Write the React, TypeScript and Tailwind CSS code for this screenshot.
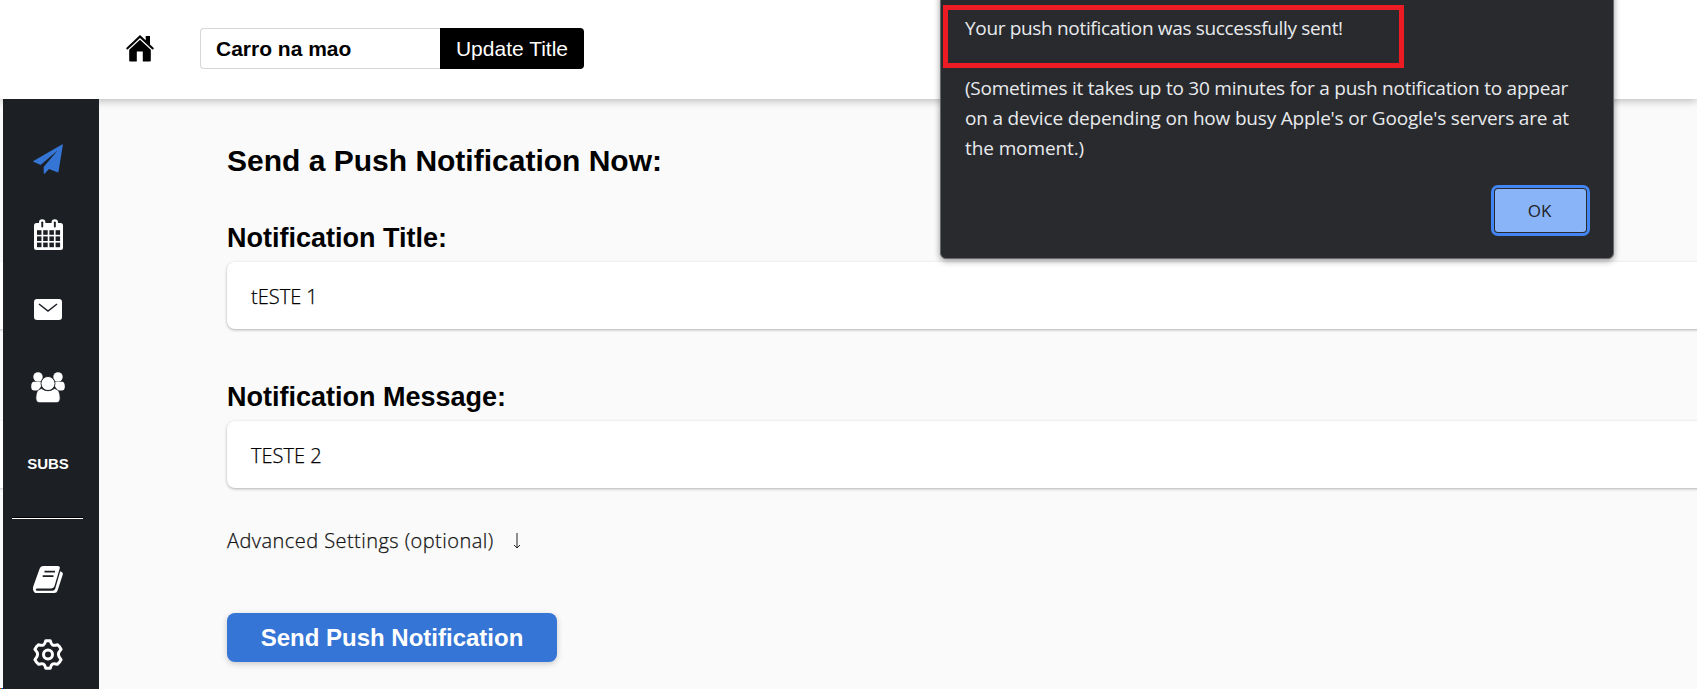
import type { ReactNode } from "react";

const heading = "font-['Liberation_Sans',Arial,sans-serif] font-bold text-black whitespace-nowrap";
const body = "font-['Open_Sans','Noto_Sans',sans-serif] whitespace-nowrap";

function HomeIcon() {
  return (
    <svg viewBox="0 0 28 27" className="h-[27px] w-[28px] shrink-0" fill="#000">
      <path d="M14 0 0 13.2l1.4 1.5L14 3l12.6 11.7 1.4-1.5-4-3.8V1h-4.300v4.300z" />
      <path d="M14 4.800 3.200 14.800V25.500q0 1 1 1H10.800V16.500h6v10H23.800q1 0 1-1V14.800z" />
    </svg>
  );
}

function PlaneIcon() {
  return (
    <svg viewBox="0 0 30 30" className="h-[30px] w-[30px]" fill="#3575d6">
      <path d="M29.900.6Q30 0 29.400.2L.4 16.900q-.7.500 0 .9l6.800 2.900q.6.200 1-.1L24.600 6.600 11 22.500q-.3.300-.3.800v5.700q.2 1.200 1.200.5l4.100-4.400 8.400 3.200q.9.300 1.100-.6z" />
    </svg>
  );
}

function CalendarIcon() {
  const cols = [3, 9.200, 15.400, 21.600];
  const rows = [11.200, 17.400, 23.600];
  return (
    <svg viewBox="0 0 29 31" className="h-[31px] w-[29px]">
      <rect x="0" y="4" width="29" height="27" rx="2.500" fill="#fff" />
      <rect x="5" y="0.200" width="6.400" height="10" rx="3.200" fill="#fff" />
      <rect x="17.600" y="0.200" width="6.400" height="10" rx="3.200" fill="#fff" />
      <rect x="7.300" y="2.400" width="1.900" height="6" rx=".9" fill="#1c1f24" />
      <rect x="19.900" y="2.400" width="1.900" height="6" rx=".9" fill="#1c1f24" />
      {rows.map((y) =>
        cols.map((x) => <rect key={`${x}-${y}`} x={x} y={y} width="4.500" height="4.600" fill="#1c1f24" />),
      )}
    </svg>
  );
}

function MailIcon() {
  return (
    <svg viewBox="0 0 28 21" className="h-[21px] w-[28px]">
      <rect width="28" height="21" rx="3" fill="#fff" />
      <path d="M5 5l9 7 9-7" fill="none" stroke="#1c1f24" strokeWidth="1.500" />
    </svg>
  );
}

function PeopleIcon() {
  return (
    <svg viewBox="0 0 34 31" className="h-[31px] w-[34px]" fill="#fff">
      <circle cx="7" cy="4.900" r="4.700" />
      <circle cx="27" cy="4.900" r="4.700" />
      <path d="M2.500 9.800Q0 10.500.2 15q.2 3.500 3 3.500H7.500L13 9.500z" />
      <path d="M31.500 9.800Q34 10.500 33.800 15q-.2 3.500-3 3.500H26.500L21 9.500z" />
      <g stroke="#1c1f24" strokeWidth=".9">
        <path d="M10.500 16.500q6.500 4.500 13 0 5.700.7 5.700 9.500 0 4.800-4 4.800H8.800q-4 0-4-4.800 0-8.800 5.700-9.500z" />
        <circle cx="17" cy="11.500" r="7" />
      </g>
    </svg>
  );
}

function BookIcon() {
  return (
    <svg viewBox="0 0 30 27" className="h-[27px] w-[30px]">
      <path d="M10.500 0H25q2.300 0 1.700 2.400L21.500 20q-.8 2.400-3 2.400H4.500q-1.700 0-1.700 1.300 0 1.100 1.500 1.100H19.500q2 0 2.600-1.800L27.300 5.200 28.700 6q1.500.8 1 2.700L24.600 24.500q-.8 2.500-3.300 2.500H4q-3.300 0-4-3.600-.2-1.700.5-3.600L6.500 3Q7.500 0 10.500 0z" fill="#fff" />
      <path d="M11.500 5.700H22M9.700 10.200H20.500" fill="none" stroke="#1c1f24" strokeWidth="1.800" />
    </svg>
  );
}

function GearIcon() {
  return (
    <svg viewBox="0 0 30 31" className="h-[31px] w-[30px]" fill="none" stroke="#fff" strokeWidth="3" strokeLinejoin="round">
      <path d="M12.800 1.700h4.400q1 3.500 2.300 4.300 1.500.8 5-.2 2 1.200 3.600 4.500-2.700 3-2.700 5.200t2.700 5.200q-1.600 3.300-3.600 4.500-3.500-1-5-.2-1.300.8-2.300 4.300h-4.400q-1-3.500-2.300-4.300-1.500-.8-5 .2-2-1.200-3.600-4.500 2.700-3 2.700-5.200T1.900 10.300q1.600-3.300 3.600-4.500 3.500 1 5 .2 1.300-.8 2.300-4.300z" />
      <circle cx="15" cy="15.500" r="4.500" />
    </svg>
  );
}

function NavItem({ className, children }: { className: string; children: ReactNode }) {
  return <a className={`flex w-full shrink-0 items-center justify-center pr-[6px] ${className}`}>{children}</a>;
}

function Field({ label, value }: { label: string; value: string }) {
  return (
    <div className="h-[159px]">
      <h2 className={`${heading} h-[42px] text-[27px] leading-[36px]`}>{label}</h2>
      <div
        className={`${body} flex h-[67px] w-[1500px] items-center rounded-lg bg-white pt-[3px] pl-[24px] text-[20px] font-light text-black shadow-[0_1px_3px_rgba(0,0,0,0.3)] [-webkit-text-stroke:0.25px_#000]`}
      >
        {value}
      </div>
    </div>
  );
}

function AlertDialog() {
  return (
    <div
      className={`${body} absolute top-[-10px] left-[940px] h-[269px] w-[674px] rounded-[6px] border border-[#66686b] bg-[#292a2d] px-[24px] pt-[22px] text-[19px] leading-[30px] text-[#e8eaed] shadow-[0_2px_6px_rgba(0,0,0,0.4)]`}
    >
      <p className="tracking-[-0.330px]">Your push notification was successfully sent!</p>
      <p className="mt-[30px] tracking-[-0.230px]">
        (Sometimes it takes up to 30 minutes for a push notification to appear
        <br />
        <span className="tracking-[-0.180px]">on a device depending on how busy Apple's or Google's servers are at</span>
        <br />
        <span className="tracking-[-0.100px]">the moment.)</span>
      </p>
      <button className="absolute top-[198px] left-[554px] flex h-[43px] w-[91px] items-center justify-center rounded-[3px] bg-[#8ab4f8] pr-[2px] text-[17px] text-[#202124] shadow-[0_0_0_1px_#292a2d,0_0_0_4px_#4285f4]">
        OK
      </button>
      <div className="absolute top-[14px] left-[2px] h-[63px] w-[461px] border-[5px] border-[#ed1c24]" />
    </div>
  );
}

export default function App() {
  return (
    <div className="relative flex h-[689px] w-[1697px] flex-col overflow-hidden bg-[#fafafa]">
      <header className="relative z-10 flex h-[99px] shrink-0 items-center bg-white pb-[2px] pl-[126px] shadow-[0_2px_8px_rgba(0,0,0,0.25)]">
        <HomeIcon />
        <div className="ml-[46px] flex h-[41px]">
          <div className={`${heading} flex w-[240px] items-center rounded-l-[4px] border border-r-0 border-[#d5d7d9] pl-[15px] text-[21px]`}>
            Carro na mao
          </div>
          <button className="w-[144px] rounded-r-[4px] bg-black font-['Liberation_Sans',Arial,sans-serif] text-[21px] whitespace-nowrap text-white">
            Update Title
          </button>
        </div>
      </header>
      <div className="flex min-h-0 flex-1">
        <div className="w-[3px] shrink-0 pt-[163px]">
          <div className="h-[67px] bg-white shadow-[0_1px_3px_rgba(0,0,0,0.3)]" />
          <div className="mt-[92px] h-[67px] bg-white shadow-[0_1px_3px_rgba(0,0,0,0.3)]" />
          <div className="mt-[200px] flex h-px">
            <i className="w-px bg-[#ff0000]" />
            <i className="w-px bg-[#00c000]" />
            <i className="w-px bg-[#0000ff]" />
          </div>
        </div>
        <nav className="relative z-20 flex w-[96px] shrink-0 flex-col overflow-hidden bg-[#1c1f24] pt-[22px]">
          <NavItem className="h-[76px]"><PlaneIcon /></NavItem>
          <NavItem className="h-[74px]"><CalendarIcon /></NavItem>
          <NavItem className="h-[76px]"><MailIcon /></NavItem>
          <NavItem className="h-[80px]"><PeopleIcon /></NavItem>
          <NavItem className="h-[74px]">
            <span className="font-['Liberation_Sans',Arial,sans-serif] text-[15px] font-bold text-white">SUBS</span>
          </NavItem>
          <div className="mt-[16px] ml-[9px] h-[2px] w-[71px] shrink-0 border-t border-black bg-white" />
          <NavItem className="mt-[22px] h-[76px]"><BookIcon /></NavItem>
          <NavItem className="h-[74px]"><GearIcon /></NavItem>
        </nav>
        <main className="flex flex-1 flex-col items-start pt-[42px] pl-[128px]">
          <h1 className={`${heading} mb-[39px] h-[40px] text-[30px] leading-[40px]`}>Send a Push Notification Now:</h1>
          <Field label="Notification Title:" value="tESTE 1" />
          <Field label="Notification Message:" value="TESTE 2" />
          <div className={`${body} -mt-[12px] flex h-[30px] items-center text-[20px] font-light tracking-[0.450px] text-[#111] [-webkit-text-stroke:0.25px_#111]`}>
            Advanced Settings (optional)
            <svg viewBox="0 0 8 16" className="ml-[19px] h-[16px] w-[8px]" fill="none" stroke="#222">
              <path d="M4 0v14.500M1 12l3 3 3-3" />
            </svg>
          </div>
          <button className="mt-[57px] h-[49px] w-[330px] shrink-0 rounded-lg bg-[#3575d6] font-['Liberation_Sans',Arial,sans-serif] text-[24px] font-bold whitespace-nowrap text-white shadow-[0_2px_6px_rgba(0,0,0,0.2)]">
            Send Push Notification
          </button>
        </main>
      </div>
      <div className="absolute top-0 left-0 z-30">
        <AlertDialog />
      </div>
    </div>
  );
}
